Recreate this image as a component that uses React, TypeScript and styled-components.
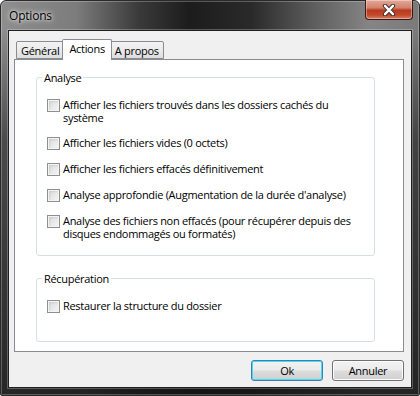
import React from "react";
import styled, { createGlobalStyle, css } from "styled-components";

const Global = createGlobalStyle`
  html, body { margin: 0; padding: 0; background: #ffffff; }
  body { width: 420px; height: 396px; overflow: hidden; }
  * { box-sizing: border-box; }
`;

const uiFont = css`
  font-family: "Open Sans", "Noto Sans", sans-serif;
  font-size: 11px;
  letter-spacing: -0.3px;
  color: #000;
`;

const Window = styled.div`
  width: 420px;
  height: 396px;
  display: flex;
  flex-direction: column;
  border-radius: 6px 6px 2px 2px;
  border: 1px solid #2a2a2a;
  background:
    linear-gradient(180deg, rgba(0,0,0,0) 0px, rgba(0,0,0,0) 30px, rgba(20,20,20,0.55) 140px, rgba(20,20,20,0.85) 396px),
    linear-gradient(90deg, #8e8e8e 0%, #7c7c7c 18%, #3a3a3a 33%, #1c1c1c 45%, #2a2a2a 60%, #5e5e5e 75%, #858585 88%, #7a7a7a 100%);
  padding: 0 7px 7px 7px;
  box-shadow: inset 0 0 0 1px rgba(255,255,255,0.25);
`;

const TitleBar = styled.div`
  height: 29px;
  display: flex;
  align-items: flex-start;
  justify-content: space-between;
`;

const Title = styled.div`
  ${uiFont};
  font-size: 12px;
  letter-spacing: -0.2px;
  padding: 6px 0 0 1px;
  text-shadow: 0 0 6px rgba(255,255,255,0.95), 0 0 3px rgba(255,255,255,0.8);
`;

const CloseButton = styled.div`
  width: 48px;
  height: 20px;
  margin-top: -1px;
  margin-right: -1px;
  border: 1px solid #3a1a14;
  border-top: none;
  border-radius: 0 0 4px 4px;
  background: linear-gradient(180deg, #e3a99a 0%, #d2826d 40%, #b8391f 55%, #c44a2c 80%, #d8806a 100%);
  box-shadow: inset 0 0 0 1px rgba(255,255,255,0.35);
  display: flex;
  align-items: center;
  justify-content: center;
`;

const Client = styled.div`
  flex: 1;
  background: #f0f0f0;
  border: 1px solid #1f1f1f;
  box-shadow: 0 0 0 1px rgba(255,255,255,0.25);
  display: flex;
  flex-direction: column;
  padding: 7px 7px 0 5px;
`;

const TabStrip = styled.div`
  display: flex;
  align-items: flex-end;
  padding-left: 2px;
  height: 21px;
  position: relative;
  z-index: 1;
`;

const Tab = styled.div<{ $active?: boolean }>`
  ${uiFont};
  height: ${(p) => (p.$active ? "21px" : "18px")};
  padding: ${(p) => (p.$active ? "1px 6px 0" : "1px 4px 0")};
  margin: ${(p) => (p.$active ? "0 -2px" : "0")};
  border: 1px solid #898c95;
  border-bottom: ${(p) => (p.$active ? "none" : "1px solid #898c95")};
  border-radius: 2px 2px 0 0;
  background: ${(p) => (p.$active ? "#ffffff" : "linear-gradient(180deg, #f2f2f2 0%, #ebebeb 50%, #dddddd 100%)")};
  position: relative;
  z-index: ${(p) => (p.$active ? 2 : 1)};
  line-height: 15px;
  ${(p) => (p.$active ? "top: 1px;" : "")}
`;

const Panel = styled.div`
  height: 293px;
  background: #ffffff;
  border: 1px solid #898c95;
  padding: 10px 28px 0 21px;
  display: flex;
  flex-direction: column;
  gap: 15px;
`;

const Group = styled.fieldset<{ $padBottom: number }>`
  margin: 0;
  border: 1px solid #d5dfe5;
  border-radius: 3px;
  padding: 14px 10px ${(p) => p.$padBottom}px 10px;
  display: flex;
  flex-direction: column;
  gap: 13px;
  min-width: 0;
`;

const Legend = styled.legend`
  ${uiFont};
  padding: 0 2px;
  margin-left: -5px;
  line-height: 15px;
`;

const Row = styled.label`
  display: flex;
  align-items: flex-start;
  gap: 3px;
`;

const Box = styled.span`
  flex: none;
  width: 13px;
  height: 13px;
  border: 1px solid #8e8f8f;
  background: linear-gradient(135deg, #d6d6d6 0%, #e8e8e8 50%, #f6f6f6 100%);
  box-shadow: inset 0 0 0 1px #f4f4f4, inset 1px 1px 2px 1px rgba(0,0,0,0.08);
`;

const RowText = styled.span`
  ${uiFont};
  line-height: 13px;
  margin-top: -1px;
`;

const ButtonRow = styled.div`
  display: flex;
  justify-content: flex-end;
  gap: 9px;
  padding: 8px 0 0 0;
`;

const Button = styled.div<{ $default?: boolean }>`
  ${uiFont};
  width: 72px;
  height: 21px;
  display: flex;
  align-items: center;
  justify-content: center;
  border-radius: 3px;
  border: 1px solid ${(p) => (p.$default ? "#3c7fb1" : "#707070")};
  background: linear-gradient(180deg, #f2f2f2 0%, #ebebeb 48%, #dddddd 52%, #cfcfcf 100%);
  box-shadow: inset 0 0 0 1px ${(p) => (p.$default ? "#48d9f4" : "#fcfcfc")};
`;

const items = [
  "Afficher les fichiers trouvés dans les dossiers cachés du système",
  "Afficher les fichiers vides (0 octets)",
  "Afficher les fichiers effacés définitivement",
  "Analyse approfondie (Augmentation de la durée d'analyse)",
  "Analyse des fichiers non effacés (pour récupérer depuis des disques endommagés ou formatés)",
];

function Check({ label }: { label: string }) {
  return (
    <Row>
      <Box />
      <RowText>{label}</RowText>
    </Row>
  );
}

export default function App() {
  return (
    <>
      <Global />
      <Window>
        <TitleBar>
          <Title>Options</Title>
          <CloseButton>
            <svg width="14" height="12" viewBox="0 0 14 12">
              <path d="M3 1.8 L11 10.2 M11 1.8 L3 10.2" stroke="#3a2a28" strokeWidth="4.2" fill="none" strokeLinecap="round" />
              <path d="M3 1.8 L11 10.2 M11 1.8 L3 10.2" stroke="#ffffff" strokeWidth="2.4" fill="none" strokeLinecap="round" />
            </svg>
          </CloseButton>
        </TitleBar>
        <Client>
          <TabStrip>
            <Tab>Général</Tab>
            <Tab $active>Actions</Tab>
            <Tab>A propos</Tab>
          </TabStrip>
          <Panel>
            <Group $padBottom={15}>
              <Legend>Analyse</Legend>
              {items.map((t) => (
                <Check key={t} label={t} />
              ))}
            </Group>
            <Group $padBottom={28}>
              <Legend>Récupération</Legend>
              <Check label="Restaurer la structure du dossier" />
            </Group>
          </Panel>
          <ButtonRow>
            <Button $default>Ok</Button>
            <Button>Annuler</Button>
          </ButtonRow>
        </Client>
      </Window>
    </>
  );
}
